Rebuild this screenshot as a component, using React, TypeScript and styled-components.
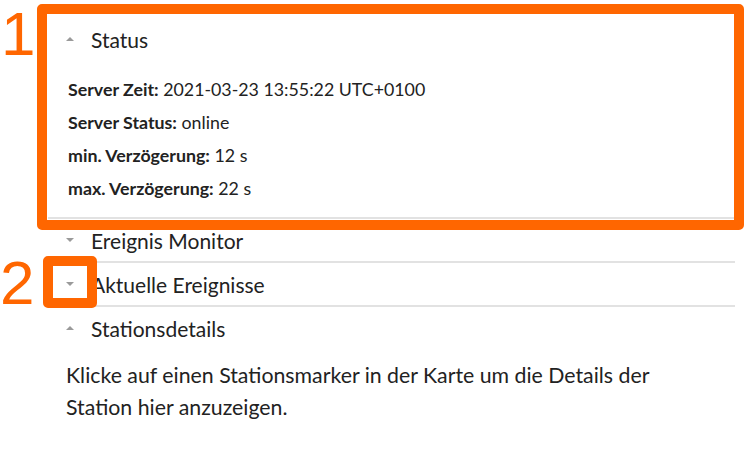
import { useState } from 'react'
import styled, { createGlobalStyle } from 'styled-components'

const ORANGE = '#ff6600'
const LINE = '#e2e2e2'

const GlobalStyle = createGlobalStyle`
    html, body {
        margin: 0;
        padding: 0;
        background: #fff;
    }
    body {
        font-family: Lato, 'Noto Sans', sans-serif;
        color: #222;
    }
`

const Page = styled.div`
    position: relative;
    width: 744px;
    height: 450px;
    overflow: hidden;
    padding: 18px 0 0 48px;
    box-sizing: border-box;
`

const Accordion = styled.div`
    width: 687px;
    display: flex;
    flex-direction: column;
`

const Section = styled.section<{ $last?: boolean }>`
    border-bottom: ${(p) => (p.$last ? 'none' : `2px solid ${LINE}`)};
`

const Header = styled.button`
    display: flex;
    align-items: center;
    width: 100%;
    height: 42px;
    padding: 0 0 0 18px;
    border: none;
    background: none;
    font-family: Lato, sans-serif;
    font-size: 21px;
    color: #222;
    cursor: pointer;
    text-align: left;
`

const Caret = styled.span<{ $open: boolean }>`
    width: 0;
    height: 0;
    margin-right: 17px;
    border-left: 4.5px solid transparent;
    border-right: 4.5px solid transparent;
    ${(p) =>
        p.$open
            ? `border-bottom: 4px solid #9a9a9a;`
            : `border-top: 4px solid #9a9a9a;`}
`

const StatusBody = styled.div`
    padding: 13px 0 12px 20px;
    font-size: 17.8px;
`

const StatusLine = styled.div`
    line-height: 33px;

    b {
        font-weight: 700;
    }
`

const Info = styled.p`
    margin: 0;
    max-width: 610px;
    padding: 10px 0 0 18px;
    font-size: 21.3px;
    line-height: 32px;
`

const Annotation = styled.div<{ $top: number; $left: number; $w: number; $h: number }>`
    position: absolute;
    top: ${(p) => p.$top}px;
    left: ${(p) => p.$left}px;
    width: ${(p) => p.$w}px;
    height: ${(p) => p.$h}px;
    border: 10px solid ${ORANGE};
    border-radius: 5px;
    box-sizing: border-box;
    pointer-events: none;
`

const Marker = styled.div<{ $top: number; $left: number }>`
    position: absolute;
    top: ${(p) => p.$top}px;
    left: ${(p) => p.$left}px;
    font-family: 'Liberation Sans', Arial, sans-serif;
    font-size: 62px;
    line-height: 1;
    color: ${ORANGE};
`

const status = [
    { label: 'Server Zeit:', value: '2021-03-23 13:55:22 UTC+0100' },
    { label: 'Server Status:', value: 'online' },
    { label: 'min. Verzögerung:', value: '12 s' },
    { label: 'max. Verzögerung:', value: '22 s' },
]

const App = () => {
    const [open, setOpen] = useState<Record<string, boolean>>({
        status: true,
        monitor: false,
        events: false,
        details: true,
    })

    const toggle = (key: string) => setOpen((prev) => ({ ...prev, [key]: !prev[key] }))

    return (
        <>
            <GlobalStyle />
            <Page>
                <Accordion>
                    <Section>
                        <Header onClick={() => toggle('status')}>
                            <Caret $open={open.status} />
                            Status
                        </Header>
                        {open.status && (
                            <StatusBody>
                                {status.map((s) => (
                                    <StatusLine key={s.label}>
                                        <b>{s.label}</b> {s.value}
                                    </StatusLine>
                                ))}
                            </StatusBody>
                        )}
                    </Section>
                    <Section>
                        <Header onClick={() => toggle('monitor')}>
                            <Caret $open={open.monitor} />
                            Ereignis Monitor
                        </Header>
                    </Section>
                    <Section>
                        <Header onClick={() => toggle('events')}>
                            <Caret $open={open.events} />
                            Aktuelle Ereignisse
                        </Header>
                    </Section>
                    <Section $last>
                        <Header onClick={() => toggle('details')}>
                            <Caret $open={open.details} />
                            Stationsdetails
                        </Header>
                        {open.details && (
                            <Info>
                                Klicke auf einen Stationsmarker in der Karte um die Details der
                                Station hier anzuzeigen.
                            </Info>
                        )}
                    </Section>
                </Accordion>

                <Marker $top={3} $left={1}>1</Marker>
                <Annotation $top={4} $left={37} $w={707} $h={226} />
                <Marker $top={252} $left={0}>2</Marker>
                <Annotation $top={256} $left={43} $w={54} $h={52} />
            </Page>
        </>
    )
}

export default App
